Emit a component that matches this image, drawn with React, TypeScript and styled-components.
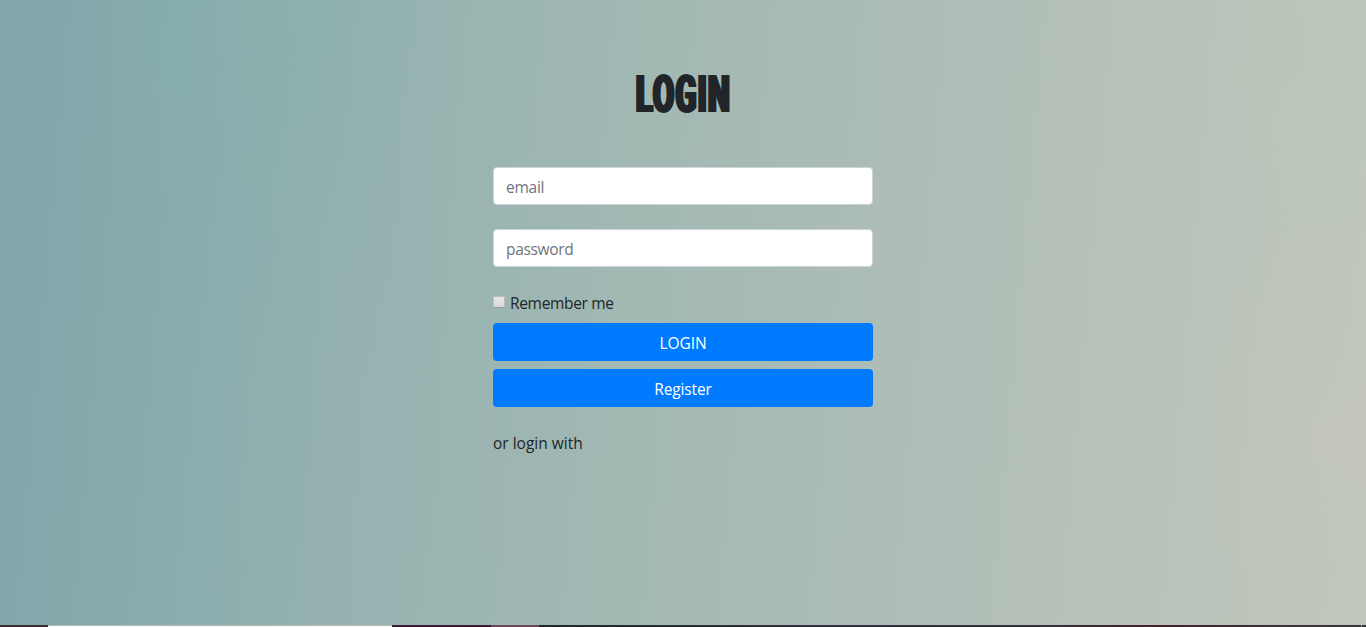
import React from "react";
import styled, { createGlobalStyle } from "styled-components";

const GlobalStyle = createGlobalStyle`
  * { box-sizing: border-box; }
  html, body { margin: 0; padding: 0; overflow: hidden; }
  body {
    font-family: "Open Sans", "Noto Sans", sans-serif;
    font-size: 15.5px;
    line-height: 24px;
    color: #212529;
  }
`;

const Page = styled.div`
  height: 100vh;
  display: flex;
  flex-direction: column;
  background:
    radial-gradient(ellipse 200px 240px at 340px 460px, rgba(160, 172, 182, 0.12), transparent),
    radial-gradient(ellipse 200px 240px at 270px 0, rgba(130, 182, 172, 0.2), transparent),
    radial-gradient(ellipse 120px 220px at 1340px 60px, rgba(178, 204, 182, 0.25), transparent),
    radial-gradient(ellipse 140px 240px at 1330px 440px, rgba(200, 196, 186, 0.3), transparent),
    linear-gradient(95deg, #80a5aa 0%, #87acad 13%, #95b2b0 28%, #a1b8b3 45%, #acbcb6 62%, #b6c1b9 80%, #c1c7bb 100%);
`;

const Content = styled.main`
  flex: 1;
  display: flex;
  flex-direction: column;
  align-items: center;
  padding-top: 65px;
`;

const Title = styled.h1`
  margin: 0 0 42px;
  height: 60px;
  line-height: 60px;
  font-family: Roboto, sans-serif;
  font-size: 52px;
  font-weight: 900;
  letter-spacing: 1.6px;
  text-indent: 1.6px;
  white-space: nowrap;
  text-shadow: 1px 0 #212529, -1px 0 #212529, 2.2px 0 #212529, -2.2px 0 #212529;
  transform: scaleX(0.6);
`;

const Form = styled.form`
  width: 380px;
  display: flex;
  flex-direction: column;
`;

const Field = styled.input<{ $spacing: number }>`
  height: 38px;
  margin: 0 0 24px;
  padding: 8px 12px 6px;
  border: 1px solid #ced4da;
  border-radius: 4px;
  background: #fff;
  font: inherit;
  letter-spacing: ${(p) => p.$spacing}px;
  color: #495057;
  &::placeholder { color: #6c757d; opacity: 1; }
`;

const Remember = styled.label`
  height: 24px;
  margin-bottom: 8px;
  display: flex;
  align-items: center;
  gap: 5px;
  letter-spacing: -0.33px;
`;

const Checkbox = styled.input`
  appearance: none;
  width: 12px;
  height: 12px;
  margin: 0 0 3px;
  border: 1px solid #b9bcbb;
  border-bottom-color: #969b9a;
  border-radius: 1px;
  background: linear-gradient(#e9e7e8, #dad8d9);
`;

const Button = styled.button<{ $spacing: number }>`
  height: 38px;
  margin: 0 0 8px;
  padding: 1px 12px 0;
  border: 0;
  border-radius: 4px;
  background: #007bff;
  color: #fff;
  font: inherit;
  letter-spacing: ${(p) => p.$spacing}px;
`;

const Alternative = styled.p`
  margin: 16px 0 0;
`;

const BottomBar = styled.footer`
  height: 2px;
  display: flex;
`;

const Segment = styled.div<{ $width?: number; $fill: string }>`
  flex: ${(p) => (p.$width ? `0 0 ${p.$width}px` : "1")};
  background: ${(p) => p.$fill};
`;

export default function App() {
  return (
    <Page>
      <GlobalStyle />
      <Content>
        <Title>LOGIN</Title>
        <Form onSubmit={(e) => e.preventDefault()}>
          <Field type="email" placeholder="email" $spacing={-0.25} />
          <Field type="password" placeholder="password" $spacing={-0.33} />
          <Remember>
            <Checkbox type="checkbox" />
            Remember me
          </Remember>
          <Button type="submit" $spacing={-0.1}>LOGIN</Button>
          <Button type="button" $spacing={-0.12}>Register</Button>
          <Alternative>or login with</Alternative>
        </Form>
      </Content>
      <BottomBar>
        <Segment $width={48} $fill="linear-gradient(#38332f, #3f2930)" />
        <Segment $width={344} $fill="linear-gradient(#bdbdbb 50%, #f8f6f5 50%)" />
        <Segment $width={99} $fill="#3c1b32" />
        <Segment $width={48} $fill="#6a4759" />
        <Segment $fill="linear-gradient(90deg, #222426, #34303a 35%, #352f36 60%, #421f29 75%, #3b3037 90%, #343638)" />
        <Segment $width={1} $fill="#858789" />
        <Segment $width={4} $fill="#343638" />
      </BottomBar>
    </Page>
  );
}
